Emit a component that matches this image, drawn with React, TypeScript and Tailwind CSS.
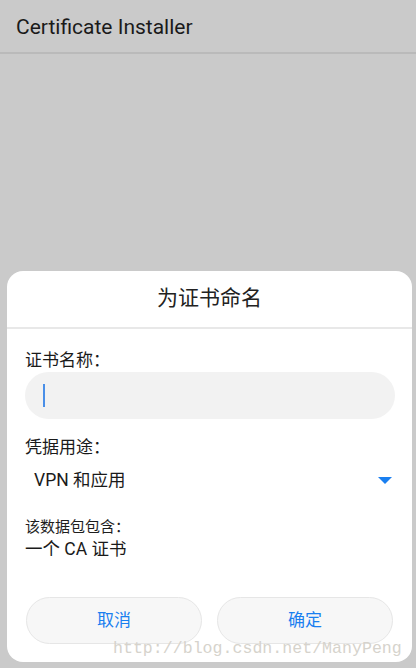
export default function App() {
  return (
    <div
      className="relative h-[668px] w-[416px] bg-[#cacaca] flex flex-col overflow-hidden"
      style={{ fontFamily: 'Roboto, "Noto Sans CJK SC", sans-serif' }}
    >
      <div className="h-[54px] border-b-2 border-[#bababa] flex items-center px-4 pt-[3px]">
        <span className="text-[21px] text-[#1a1a1a] leading-none">Certificate Installer</span>
      </div>

      <div className="flex-1 flex flex-col justify-end pl-[7px] pr-[4px] pb-[6px]">
        <div className="relative bg-white rounded-[16px] flex flex-col">
          <div className="h-[56px] flex items-center justify-center text-[21px] text-[#222]">
            为证书命名
          </div>
          <div className="h-[2px] bg-[#e8e8e8]" />

          <div className="pl-[18px] pr-[17px] flex flex-col">
            <div className="mt-[21px] h-[20px] leading-[20px] text-[17px] text-[#1a1a1a]">证书名称：</div>
            <div className="mt-[2px] h-[47px] rounded-full bg-[#f2f2f2] flex items-center pl-[18px]">
              <div className="w-[2px] h-[23px] bg-[#4a8fe8]" />
            </div>

            <div className="mt-[18px] h-[20px] leading-[20px] text-[17px] text-[#1a1a1a]">凭据用途：</div>
            <div className="mt-[7px] h-[32px] flex items-center justify-between pl-[9px] pr-[3px]">
              <span className="text-[17.5px] text-[#1a1a1a]">VPN 和应用</span>
              <svg width="14" height="7" viewBox="0 0 14 7">
                <polygon points="0,0 14,0 7,7" fill="#1a7ff0" />
              </svg>
            </div>

            <div className="mt-[21px] h-[20px] leading-[20px] text-[15px] text-[#1e1e1e]">该数据包包含：</div>
            <div className="mt-[1px] h-[22px] leading-[22px] text-[17.5px] text-[#1a1a1a]">一个 CA 证书</div>
          </div>

          <div className="mt-[37px] mb-[18px] px-[19px] flex gap-[15px]">
            <button className="flex-1 h-[47px] rounded-full bg-[#f7f7f7] border border-[#e6e6e6] text-[17px] text-[#1a7ff0]">
              取消
            </button>
            <button className="flex-1 h-[47px] rounded-full bg-[#f7f7f7] border border-[#e6e6e6] text-[17px] text-[#1a7ff0]">
              确定
            </button>
          </div>

          <div
            className="absolute left-[106px] bottom-[2px] whitespace-nowrap text-[16.6px] leading-[22px] text-[#d6d3cc] pointer-events-none"
            style={{ fontFamily: '"Liberation Mono", monospace' }}
          >
            http://blog.csdn.net/ManyPeng
          </div>
        </div>
      </div>
    </div>
  );
}
